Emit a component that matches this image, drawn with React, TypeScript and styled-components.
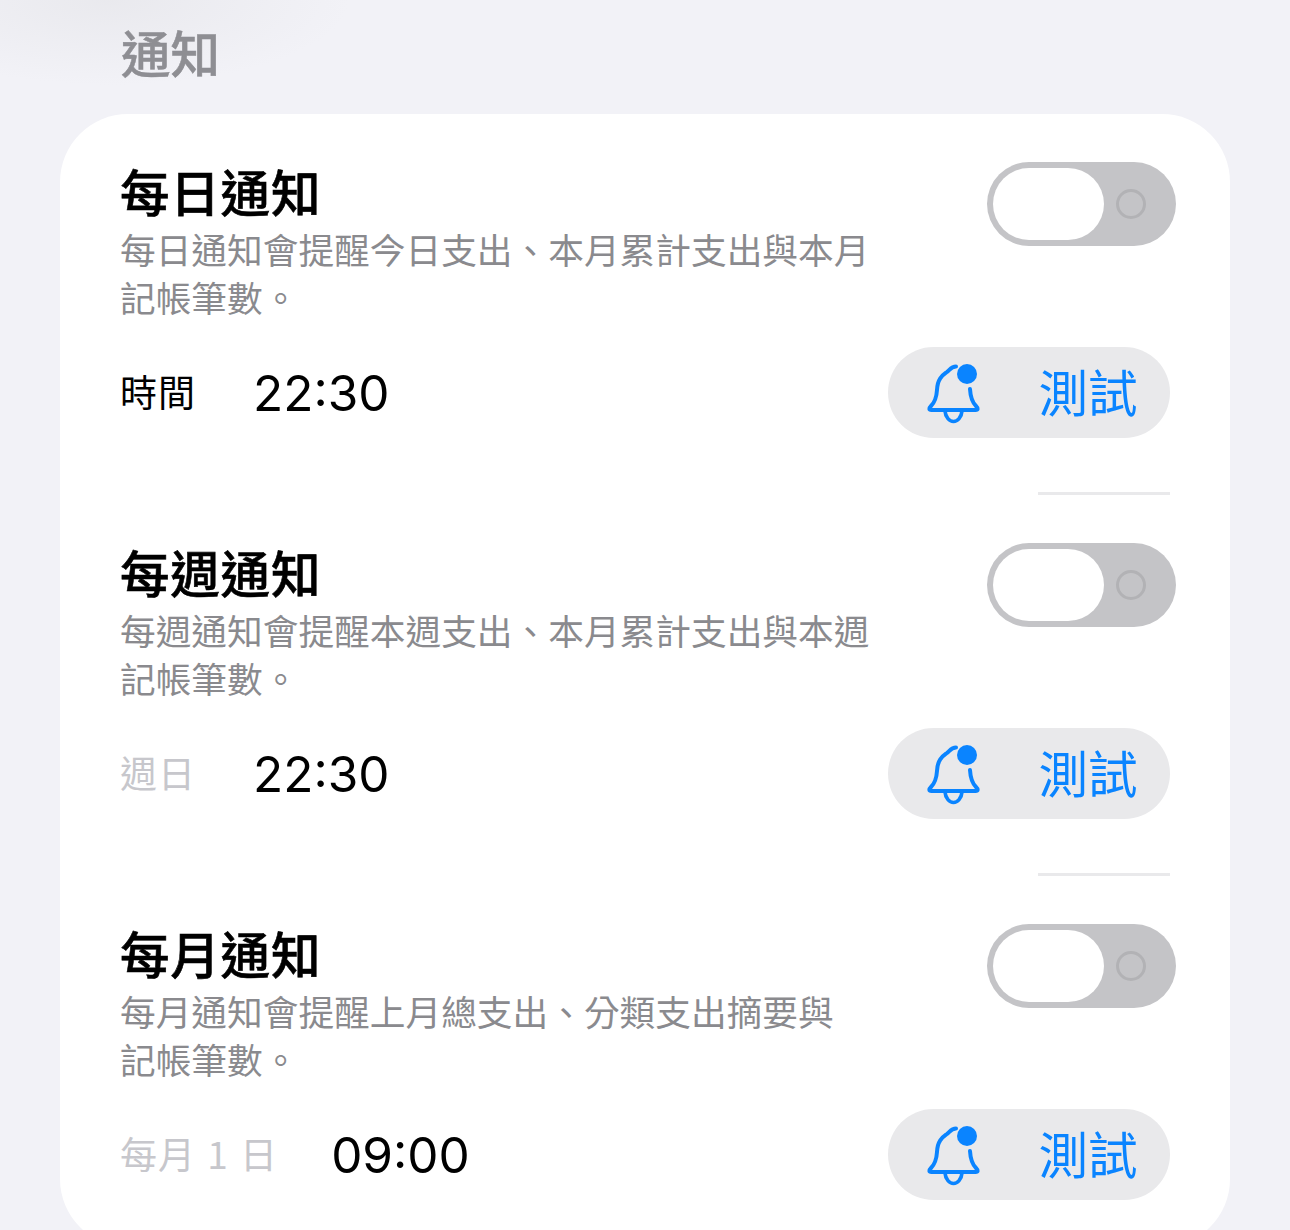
import styled, { createGlobalStyle } from "styled-components";

const cjk = `"Noto Sans CJK TC", "Noto Sans CJK SC", sans-serif`;

const GlobalStyle = createGlobalStyle`
  html, body {
    margin: 0;
    height: 1230px;
    overflow: hidden;
    background: #f2f2f7;
    font-family: ${cjk};
  }
`;

const Page = styled.div`
  height: 1230px;
  overflow: hidden;
  background:
    radial-gradient(ellipse 240px 85px at 110px 0, rgba(226, 226, 230, 0.55), rgba(242, 242, 247, 0)),
    #f2f2f7;
`;

const SectionTitle = styled.h2`
  margin: 0;
  height: 114px;
  padding: 0 0 12px 121px;
  box-sizing: border-box;
  display: flex;
  align-items: center;
  font-size: 49.5px;
  font-weight: 500;
  -webkit-text-stroke: 0.5px #8e8e93;
  color: #8e8e93;
`;

const Card = styled.div`
  margin: 0 60px;
  padding: 48px 60px 47px;
  background: #fff;
  border-radius: 68px;
`;

const Item = styled.section``;

const Head = styled.div`
  display: flex;
  justify-content: space-between;
  align-items: flex-start;
`;

const Title = styled.h3`
  margin: -1px 0 4px;
  font-size: 49.5px;
  line-height: 60px;
  letter-spacing: 0.8px;
  font-weight: 500;
  -webkit-text-stroke: 0.6px #000;
  color: #000;
`;

const Desc = styled.p`
  margin: 0;
  font-size: 35.7px;
  line-height: 47.5px;
  font-weight: 400;
  color: #8a8a8e;
`;

const DescLine = styled.span`
  display: block;
  white-space: nowrap;
`;

const Toggle = styled.div`
  width: 189px;
  height: 84px;
  margin-right: -6px;
  padding: 6px;
  box-sizing: border-box;
  display: flex;
  align-items: center;
  flex: none;
  border-radius: 42px;
  background: #c4c4c7;
`;

const Thumb = styled.span`
  width: 111px;
  height: 72px;
  border-radius: 36px;
  background: #fff;
`;

const OffMark = styled.span`
  width: 30px;
  height: 30px;
  margin-left: 12px;
  box-sizing: border-box;
  border: 3px solid #b2b2b5;
  border-radius: 50%;
`;

const TimeRow = styled.div`
  margin-top: 27px;
  display: flex;
  align-items: center;
`;

const TimeLabel = styled.span<{ $muted: boolean }>`
  margin-bottom: 4px;
  font-size: 37px;
  line-height: 44px;
  letter-spacing: 1px;
  word-spacing: 2px;
  white-space: pre;
  color: ${({ $muted }) => ($muted ? "#c7c7cc" : "#000")};
`;

const TimeValue = styled.span<{ $gap: number }>`
  margin-left: ${({ $gap }) => $gap}px;
  font-family: Inter, "Liberation Sans", sans-serif;
  font-size: 49.5px;
  font-weight: 400;
  line-height: 60px;
  color: #000;
`;

const TestButton = styled.button`
  margin-left: auto;
  width: 282px;
  height: 91px;
  padding: 0 32.5px 0 38px;
  box-sizing: border-box;
  display: flex;
  align-items: center;
  justify-content: space-between;
  border: 0;
  border-radius: 46px;
  background: #e9e9eb;
  font-family: ${cjk};
  font-size: 49.5px;
  color: #0a84ff;
`;

const ButtonText = styled.span`
  margin-bottom: 4px;
`;

const Divider = styled.div`
  width: 132px;
  height: 3px;
  margin: 54px 0 48px auto;
  background: #e9e9eb;
`;

const BellIcon = () => (
  <svg width="56" height="62" viewBox="0 0 56 62" fill="none">
    <path
      d="M44 27C44.5 36 46 40 50 44C52.5 46.5 52 48 49.5 48H5.5C3 48 2.5 46.5 5 44C9 40 10.5 36 11 28C11.5 16 17 13 21 10C24 7.5 25.5 4.5 30 4.5"
      stroke="#0a84ff"
      strokeWidth="4"
      strokeLinecap="round"
      strokeLinejoin="round"
    />
    <path
      d="M19 49C19.5 55.5 23.5 59.5 27.5 59.5C31.5 59.5 35.5 55.5 36 49"
      stroke="#0a84ff"
      strokeWidth="3.6"
      strokeLinecap="round"
    />
    <circle cx="41" cy="12" r="10" fill="#0a84ff" />
  </svg>
);

const items = [
  {
    title: "每日通知",
    desc: ["每日通知會提醒今日支出、本月累計支出與本月", "記帳筆數。"],
    label: "時間",
    muted: false,
    time: "22:30",
    gap: 57,
  },
  {
    title: "每週通知",
    desc: ["每週通知會提醒本週支出、本月累計支出與本週", "記帳筆數。"],
    label: "週日",
    muted: true,
    time: "22:30",
    gap: 57,
  },
  {
    title: "每月通知",
    desc: ["每月通知會提醒上月總支出、分類支出摘要與", "記帳筆數。"],
    label: "每月 1 日",
    muted: true,
    time: "09:00",
    gap: 53,
  },
];

export default function App() {
  return (
    <Page>
      <GlobalStyle />
      <SectionTitle>通知</SectionTitle>
      <Card>
        {items.map((item, i) => (
          <Item key={item.title}>
            <Head>
              <div>
                <Title>{item.title}</Title>
                <Desc>
                  {item.desc.map((line) => (
                    <DescLine key={line}>{line}</DescLine>
                  ))}
                </Desc>
              </div>
              <Toggle>
                <Thumb />
                <OffMark />
              </Toggle>
            </Head>
            <TimeRow>
              <TimeLabel $muted={item.muted}>{item.label}</TimeLabel>
              <TimeValue $gap={item.gap}>{item.time}</TimeValue>
              <TestButton>
                <BellIcon />
                <ButtonText>測試</ButtonText>
              </TestButton>
            </TimeRow>
            {i < items.length - 1 && <Divider />}
          </Item>
        ))}
      </Card>
    </Page>
  );
}
